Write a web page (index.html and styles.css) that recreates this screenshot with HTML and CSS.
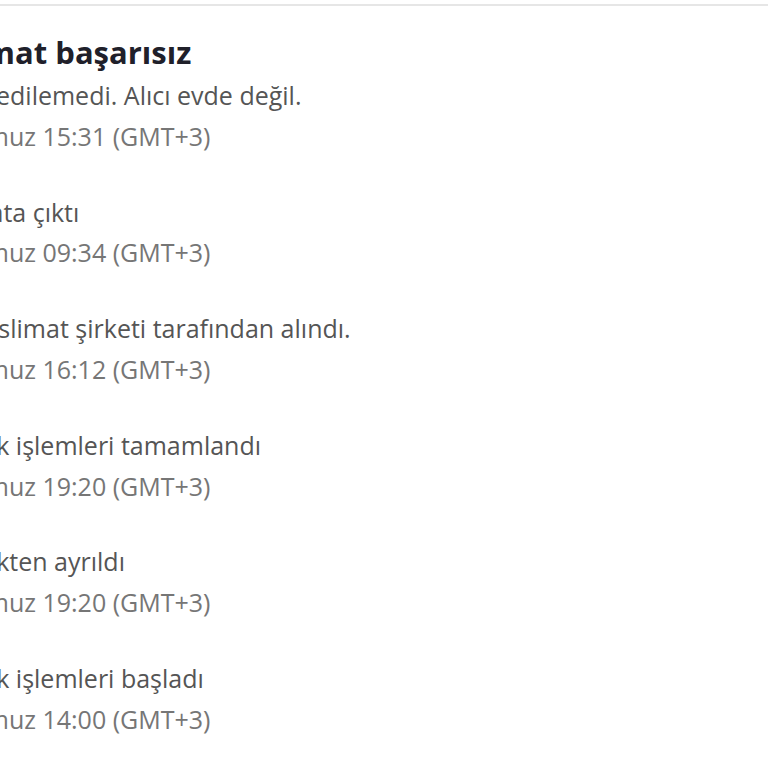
FILE: index.html
```html
<!DOCTYPE html>
<html lang="tr">
<head>
<meta charset="utf-8">
<link rel="stylesheet" href="styles.css">
</head>
<body>
<div class="panel">
  <div class="timeline">
    <h2 class="title">Teslimat başarısız</h2>
    <div class="event">
      <p class="desc">Teslim edilemedi. Alıcı evde değil.</p>
      <p class="date">2 Temmuz 15:31 (GMT+3)</p>
    </div>
    <div class="event">
      <p class="desc">Teslimata çıktı</p>
      <p class="date">2 Temmuz 09:34 (GMT+3)</p>
    </div>
    <div class="event">
      <p class="desc">Kutu teslimat şirketi tarafından alındı.</p>
      <p class="date">1 Temmuz 16:12 (GMT+3)</p>
    </div>
    <div class="event">
      <p class="desc">Gümrük işlemleri tamamlandı</p>
      <p class="date">9 Temmuz 19:20 (GMT+3)</p>
    </div>
    <div class="event">
      <p class="desc">Gümrükten ayrıldı</p>
      <p class="date">9 Temmuz 19:20 (GMT+3)</p>
    </div>
    <div class="event">
      <p class="desc">Gümrük işlemleri başladı</p>
      <p class="date">8 Temmuz 14:00 (GMT+3)</p>
    </div>
  </div>
</div>
</body>
</html>
```
FILE: styles.css
```css
html, body {
  margin: 0;
  padding: 0;
  background: #ffffff;
  overflow: hidden;
}
.panel {
  margin-top: 4px;
  border-top: 2px solid #e6e6e6;
  padding-top: 23px;
  height: 740px;
  overflow: hidden;
  font-family: "Open Sans", "Noto Sans", sans-serif;
}
.timeline {
  margin-left: -86px;
  display: flex;
  flex-direction: column;
  gap: 35px;
  white-space: nowrap;
}
.title {
  margin: 0 0 -35px 0;
  font-size: 31px;
  font-weight: 700;
  line-height: 46px;
  color: #20202a;
}
.event {
  display: flex;
  flex-direction: column;
}
.desc, .date {
  margin: 0;
  font-size: 25px;
  line-height: 40.8px;
}
.desc {
  color: #555555;
}
.date {
  color: #767676;
}
```
